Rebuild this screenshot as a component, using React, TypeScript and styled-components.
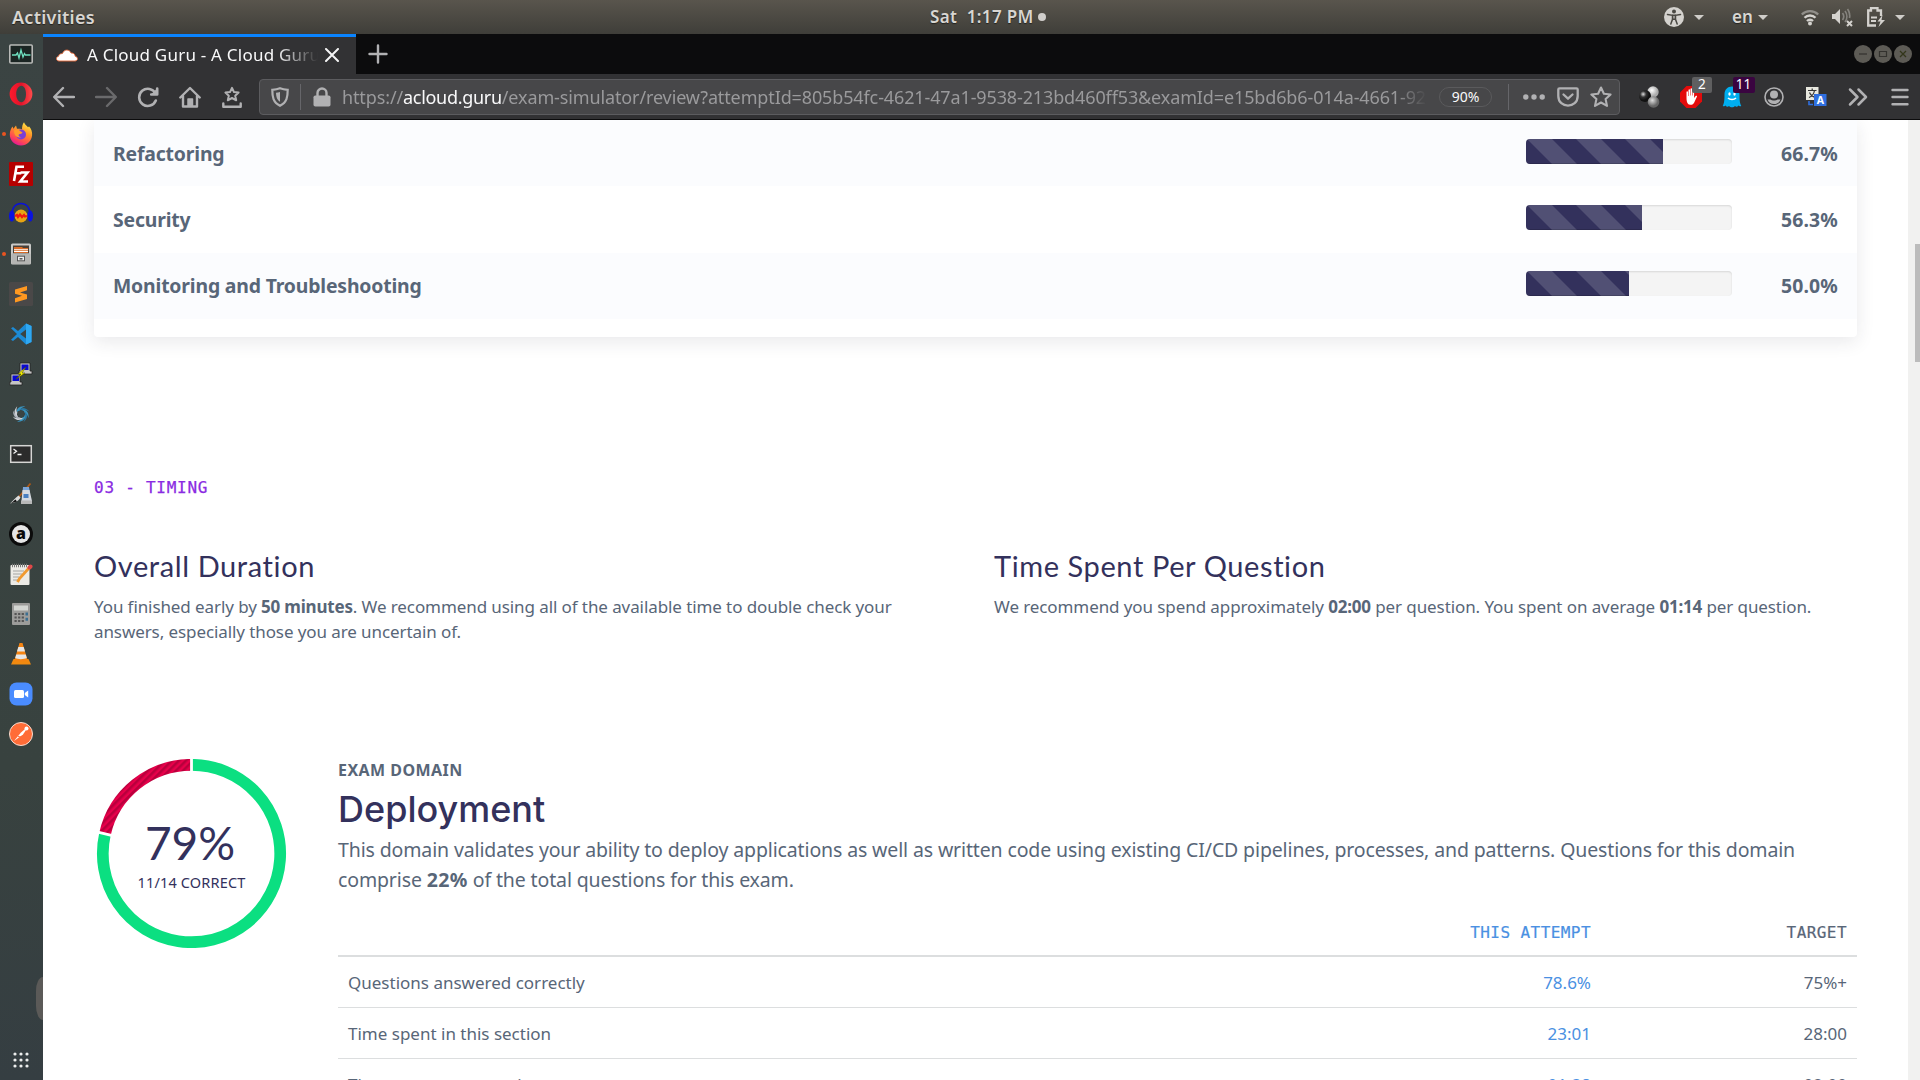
import React from 'react';
import styled, { createGlobalStyle } from 'styled-components';

const SANS = '"Noto Sans", "Open Sans", sans-serif';
const HEAD = 'Inter, Lato, sans-serif';
const MONO = '"DejaVu Sans Mono", "Liberation Mono", monospace';
const INK = '#586678';
const NAVY = '#33315c';

const GlobalStyle = createGlobalStyle`
  * { box-sizing: border-box; }
  body { margin: 0; overflow: hidden; font-family: ${SANS}; color: ${INK}; }
  p, h2, h3 { margin: 0; }
  svg { display: block; flex: none; }
`;

/* ---------- desktop shell ---------- */

const Desktop = styled.div`
  display: flex;
  flex-direction: column;
  width: 1920px;
  height: 1080px;
  overflow: hidden;
  background: #fff;
`;

const TopBar = styled.header`
  display: grid;
  grid-template-columns: 918px auto 1fr;
  align-items: center;
  height: 34px;
  flex: none;
  padding: 0 10px 0 12px;
  background: linear-gradient(#59554d, #3f3e39);
  color: #d8d6d2;
  font-size: 18px;
  font-weight: 600;
  line-height: 34px;
  text-shadow: 0 1px 1px rgba(0, 0, 0, 0.5);
`;

const Activities = styled.span`
  letter-spacing: 0.26px;
`;

const Clock = styled.div`
  display: flex;
  align-items: center;
  gap: 4px;
  font-size: 17px;
  letter-spacing: 0.34px;
  white-space: pre;
`;

const Dot = styled.i`
  width: 8px;
  height: 8px;
  border-radius: 50%;
  background: #d0cecb;
`;

const Tray = styled.div`
  display: flex;
  justify-content: flex-end;
  align-items: center;
`;

const TrayGap = styled.span<{ $w: number }>`
  width: ${(p) => p.$w}px;
`;

const Lang = styled.span`
  width: 20px;
  font-size: 17px;
`;

const Caret = styled.i`
  border: 5px solid transparent;
  border-top-color: #cfcdc9;
  border-bottom: 0;
`;

const Workspace = styled.div`
  display: flex;
  flex: 1;
  min-height: 0;
`;

const Dock = styled.nav`
  position: relative;
  display: flex;
  flex-direction: column;
  width: 43px;
  flex: none;
  background: linear-gradient(#3b4443, #38423f 70%, #353e42);
`;

const DockItem = styled.div<{ $running?: boolean }>`
  position: relative;
  display: flex;
  align-items: center;
  justify-content: center;
  width: 42px;
  height: 40px;
  flex: none;
  &::before {
    content: '';
    display: ${(p) => (p.$running ? 'block' : 'none')};
    position: absolute;
    left: 2px;
    top: 18px;
    width: 4px;
    height: 4px;
    border-radius: 50%;
    background: #e95420;
  }
`;

const DockFoot = styled(DockItem)`
  margin-top: auto;
`;

const DockBubble = styled.i`
  position: absolute;
  right: 0;
  bottom: 60px;
  width: 7px;
  height: 43px;
  border-radius: 8px 0 0 8px / 16px 0 0 16px;
  background: #5b5a58;
`;

/* ---------- browser chrome ---------- */

const Browser = styled.section`
  display: flex;
  flex-direction: column;
  flex: 1;
  min-width: 0;
`;

const TabStrip = styled.div`
  display: flex;
  height: 40px;
  flex: none;
  align-items: center;
  background: #0c0c0d;
`;

const Tab = styled.div`
  display: flex;
  align-items: center;
  width: 313px;
  height: 40px;
  padding: 0 17px 2px 12px;
  border-top: 3px solid #0a84ff;
  background: #323234;
`;

const TabTitle = styled.span`
  flex: 1;
  margin: 0 7px 0 8px;
  overflow: hidden;
  white-space: nowrap;
  color: #f9f9fa;
  font-size: 17px;
  line-height: 34px;
  letter-spacing: 0.22px;
  mask-image: linear-gradient(to right, #000 82%, transparent);
`;

const NewTab = styled.span`
  display: flex;
  width: 44px;
  justify-content: center;
`;

const WindowControls = styled.div`
  display: flex;
  gap: 2px;
  margin-left: auto;
  padding-right: 8px;
`;

const WinButton = styled.span`
  display: flex;
  align-items: center;
  justify-content: center;
  width: 18px;
  height: 18px;
  border-radius: 50%;
  background: #5d5b55;
`;

const Toolbar = styled.div`
  display: flex;
  align-items: center;
  height: 46px;
  flex: none;
  background: #323234;
  border-bottom: 1px solid #0c0c0d;
`;

const ToolButton = styled.span<{ $w?: number }>`
  position: relative;
  display: flex;
  align-items: center;
  justify-content: center;
  width: ${(p) => p.$w ?? 42}px;
  height: 40px;
  flex: none;
`;

const Badge = styled.b<{ $bg: string; $w: number }>`
  position: absolute;
  left: ${(p) => 42 - p.$w / 2 - 10}px;
  top: 0;
  width: ${(p) => p.$w}px;
  height: 16px;
  border-radius: 2px;
  background: ${(p) => p.$bg};
  color: #fff;
  font-size: 13.5px;
  font-weight: 400;
  line-height: 15px;
  text-align: center;
`;

const UrlBar = styled.div`
  display: flex;
  align-items: center;
  width: 1361px;
  height: 36px;
  margin: 0 8px 0 6px;
  flex: none;
  border: 1px solid #5c5c5f;
  border-radius: 4px;
  background: #474749;
`;

const UrlDivider = styled.i`
  width: 1px;
  height: 26px;
  flex: none;
  background: #66666a;
`;

const UrlText = styled.div`
  width: 1085px;
  flex: none;
  overflow: hidden;
  white-space: nowrap;
  color: #9a9a9c;
  font-size: 18px;
  line-height: 34px;
  letter-spacing: -0.125px;
  mask-image: linear-gradient(to right, #000 97%, transparent);
`;

const Host = styled.span`
  color: #f9f9fa;
  letter-spacing: -0.3px;
`;

const ZoomPill = styled.span`
  width: 53px;
  height: 20px;
  flex: none;
  margin: 0 16px 0 12px;
  border: 1px solid #5a5a5c;
  border-radius: 10px;
  color: #f9f9fa;
  font-size: 14px;
  line-height: 18px;
  text-align: center;
`;

const PageActions = styled.div`
  display: flex;
  align-items: center;
  gap: 11.5px;
  padding-left: 14px;
`;

/* ---------- page ---------- */

const Viewport = styled.div`
  display: flex;
  flex: 1;
  min-height: 0;
`;

const Page = styled.main`
  flex: 1;
  padding: 0 51px;
  overflow: hidden;
  background: #fff;
`;

const Scrollbar = styled.div`
  width: 12px;
  padding: 124px 0 0 7px;
  background: #f1f1f0;
`;

const Thumb = styled.div`
  height: 118px;
  background: #bcbcbc;
`;

const ScoreCard = styled.section`
  padding-bottom: 18px;
  border-radius: 0 0 4px 4px;
  background: #fff;
  box-shadow: 0 5px 18px rgba(40, 42, 60, 0.1);
`;

const ScoreRow = styled.div<{ $tint?: boolean; $h: number; $pb: number }>`
  display: grid;
  grid-template-columns: 1fr 206px 106px;
  align-items: center;
  height: ${(p) => p.$h}px;
  padding: 0 19px ${(p) => p.$pb}px;
  background: ${(p) => (p.$tint ? '#fbfcfe' : '#fff')};
  font-size: 19.4px;
  font-weight: 700;
  letter-spacing: -0.17px;
`;

const ScoreValue = styled.span`
  text-align: right;
  letter-spacing: 0.15px;
`;

const Meter = styled.div`
  height: 25px;
  margin-bottom: 3px;
  overflow: hidden;
  border-radius: 4px;
  background: #f4f4f4;
  box-shadow: inset 0 1px 2px rgba(0, 0, 0, 0.12);
`;

const MeterFill = styled.div`
  height: 100%;
  background-color: ${NAVY};
  background-image: linear-gradient(
    45deg,
    rgba(255, 255, 255, 0.15) 25%,
    transparent 25%,
    transparent 50%,
    rgba(255, 255, 255, 0.15) 50%,
    rgba(255, 255, 255, 0.15) 75%,
    transparent 75%
  );
  background-size: 49px 49px;
  background-position: 1.5px 0;
  box-shadow: inset 0 -1px 0 rgba(0, 0, 0, 0.15);
`;

const SectionLabel = styled.p`
  margin-top: 139px;
  color: #8a2be2;
  font: 16px/24px ${MONO};
  letter-spacing: 0.75px;
  -webkit-text-stroke: 0.25px;
`;

const TimingColumns = styled.section`
  display: grid;
  grid-template-columns: 820px 1fr;
  column-gap: 80px;
  margin-top: 48px;
`;

const TimingTitle = styled.h3`
  color: ${NAVY};
  font: 400 29px/36px Lato, sans-serif;
  letter-spacing: 0.6px;
`;

const TimingText = styled.p`
  margin-top: 10px;
  font-size: 17px;
  line-height: 25px;
  letter-spacing: -0.09px;
  b { letter-spacing: -0.2px; }
`;

const Domain = styled.section`
  display: grid;
  grid-template-columns: 195px 1fr;
  column-gap: 49px;
  align-items: start;
  margin-top: 115px;
`;

const Donut = styled.div`
  display: grid;
  place-items: center;
  width: 195px;
  height: 189px;
  > * { grid-area: 1 / 1; }
`;

const DonutText = styled.div`
  display: flex;
  flex-direction: column;
  align-items: center;
  gap: 3px;
  color: ${NAVY};
`;

const Percent = styled.span`
  padding-right: 3px;
  font: 400 46px/53px Lato, sans-serif;
`;

const Correct = styled.span`
  font-size: 14.5px;
  line-height: 20px;
  letter-spacing: 0.16px;
`;

const Eyebrow = styled.p`
  margin-top: 1px;
  font-size: 16px;
  font-weight: 700;
  line-height: 20px;
  letter-spacing: 0.45px;
`;

const DomainTitle = styled.h2`
  margin-top: 7px;
  color: ${NAVY};
  font: 500 36px/44px ${HEAD};
`;

const DomainText = styled.p`
  margin-top: 4px;
  font-size: 19.5px;
  line-height: 30px;
  letter-spacing: -0.13px;
  b { letter-spacing: 0.4px; }
`;

const StatHead = styled.div`
  display: grid;
  grid-template-columns: 1fr 260px 256px;
  align-items: center;
  height: 47px;
  margin-top: 15px;
  padding: 0 10px;
  border-bottom: 2px solid #dcdedf;
  font: 16px ${MONO};
  letter-spacing: 0.43px;
  text-align: right;
  -webkit-text-stroke: 0.2px;
`;

const StatRow = styled.div`
  display: grid;
  grid-template-columns: 1fr 260px 256px;
  align-items: center;
  height: 51px;
  padding: 0 10px;
  border-bottom: 1px solid #dcdedf;
  font-size: 17px;
`;

const Attempt = styled.span`
  color: #4a90e2;
  text-align: right;
`;

const Target = styled.span`
  text-align: right;
`;

/* ---------- icons ---------- */

const G = '#b1b1b3';

const Stroke = ({ size = 22, color = G, w = 2.2, children }: { size?: number; color?: string; w?: number; children: React.ReactNode }) => (
  <svg width={size} height={size} viewBox="0 0 22 22" fill="none" stroke={color} strokeWidth={w} strokeLinecap="round" strokeLinejoin="round">
    {children}
  </svg>
);

const dockIcons: { id: string; running?: boolean; art: React.ReactNode }[] = [
  { id: 'monitor', art: <>
    <rect x=".8" y="3" width="22.4" height="18" rx="1" fill="#1b2523" stroke="#b9bab8" strokeWidth="1.6" />
    <path d="M3 13h4l1.5-2 1.5 5 2-8 2 7 1.5-3.5 1 1.5h5" stroke="#6fe0c0" strokeWidth="1.3" fill="none" /></> },
  { id: 'opera', art: <>
    <defs><linearGradient id="op" x2="1" y2="0"><stop stopColor="#ff1b2d" /><stop offset=".5" stopColor="#e0132a" /><stop offset="1" stopColor="#ff4b4b" /></linearGradient></defs>
    <path fillRule="evenodd" fill="url(#op)" d="M12 .6a11.4 11.4 0 1 0 0 22.8A11.4 11.4 0 1 0 12 .6zm.4 3.2c3 0 4.6 3.8 4.6 8.2s-1.6 8.2-4.6 8.2-5.2-3.8-5.2-8.2 2.2-8.2 5.2-8.2z" /></> },
  { id: 'firefox', running: true, art: <>
    <defs><linearGradient id="fx" x1=".8" y1="0" x2=".3" y2="1"><stop stopColor="#fff04a" /><stop offset=".4" stopColor="#ff9626" /><stop offset=".75" stopColor="#ff4a52" /><stop offset="1" stopColor="#e3149b" /></linearGradient></defs>
    <path fill="url(#fx)" d="M15 .3c1 2.5 3 3.5 4 5 .8-.3.9-1 .9-1 2.5 2.5 3.5 6 3.2 9C22.6 19 18 23.5 12 23.5 5.5 23.5.8 18.5.8 12.6.8 9 2 6.5 3.6 4.5l.8 2.2L7 3.5l1 3.2c2 0 4 .1 5 .7C13 5 13.5 2 15 .3z" />
    <circle cx="12" cy="12.5" r="5" fill="#7a3fd6" />
    <path d="M5 8.5c2-1.5 5-1 6.5.8l2 1.2c-.5 1.5-2 1.5-3.5 1.7-1 1 .2 3 2.5 3-4 1-7.500-1-7.500-6.700z" fill="#ff9a2a" /></> },
  { id: 'filezilla', art: <>
    <rect width="24" height="24" rx="1" fill="#b50000" />
    <path d="M5 19L7.5 4.8H15M6.3 11.300h6M11.5 10.500h7l-7.200 9h7.700" stroke="#fff" strokeWidth="2.6" fill="none" /></> },
  { id: 'audacity', art: <>
    <circle cx="12" cy="14" r="6.5" fill="#e8a512" />
    <path d="M3 13C3 5 7 1.500 12 1.500S21 5 21 13" stroke="#0a12d8" strokeWidth="1.6" fill="none" />
    <ellipse cx="2.800" cy="14" rx="2.800" ry="5.500" fill="#0a12e0" /><ellipse cx="21.200" cy="14" rx="2.800" ry="5.500" fill="#0a12e0" />
    <path d="M6 14l2-1 1 2 2-2.500 2 2.500 2-2 1 1.500 2-.5" stroke="#f01a10" strokeWidth="2.2" fill="none" /></> },
  { id: 'files', running: true, art: <>
    <rect x="2" y="1.5" width="20" height="21" rx="1.5" fill="#c9c9c7" /><rect x="4" y="3.5" width="16" height="8" fill="#4a4038" />
    <path d="M5 5h8l1 1h5v5H5z" fill="#d96c28" /><path d="M5 7.8h14M5 9.5h14" stroke="#fff" strokeWidth="1.1" />
    <rect x="2.500" y="11.5" width="19" height="10.5" rx="1" fill="#b5b5b3" /><rect x="8.5" y="14.2" width="7" height="4.6" fill="#eee" stroke="#555" /><path d="M10.500 16.8h3" stroke="#444" strokeWidth="1.400" /></> },
  { id: 'sublime', art: <>
    <rect width="24" height="24" rx="1.5" fill="#4a4848" />
    <path d="M18 4v4.300L11 10.600l7 2V17L6 20.500v-4.300l7-2.400-7-2V7.500z" fill="#ff9820" /></> },
  { id: 'vscode', art: <>
    <path d="M17 1.5L22.5 4v16L17 22.5 9 15l-5 4-2-1.200L8 12 2 6.200 4 5l5 4z" fill="#1c8bd6" />
    <path d="M17 1.5L22.5 4v16L17 22.5z" fill="#2fa8f2" /><path d="M17 7.500v9L11.200 12z" fill="#3a4443" /></> },
  { id: 'putty', art: <>
    <path d="M11 1h10v8h2v3H10V9h1z" fill="#c4c4c4" stroke="#222" strokeWidth=".8" /><rect x="12.5" y="2.5" width="7" height="5.5" fill="#0a0ad0" />
    <path d="M2 12h9v8h2v3H.8v-3H2z" fill="#c4c4c4" stroke="#222" strokeWidth=".8" /><rect x="3.5" y="13.5" width="6.5" height="5.5" fill="#0a0ad0" />
    <path d="M17 5l-8 7h3l-5 5 9-6h-3z" fill="#f5f000" stroke="#555500" strokeWidth=".6" /></> },
  { id: 'swirl', art: <g transform="translate(12 12) scale(.84)">
    {[0, 45, 90, 135, 180].map((a) => (
      <path key={a} transform={`rotate(${a})`} d="M-5-1C-6-6-2-10 5-9 1-8-1-6-1-4.500-3-4-4.500-3-5-1z" fill={a % 90 ? '#2b76a0' : '#3a93bd'} />
    ))}
    {[225, 265, 305].map((a) => (
      <path key={a} transform={`rotate(${a})`} d="M-5-1C-6-6-2-10 5-9 1-8-1-6-1-4.500-3-4-4.500-3-5-1z" fill={a === 265 ? '#a9b0b8' : '#cdd1d6'} />
    ))}
    <circle r="3.800" fill="#3a4443" /></g> },
  { id: 'terminal', art: <>
    <rect x="1.700" y="3.700" width="20.600" height="16.600" fill="#2b2b2b" stroke="#d6d6d4" strokeWidth="1.500" />
    <path d="M4.500 7l3 2.200-3 2.200M8.500 12.500h4" stroke="#f4f4f4" strokeWidth="1.300" fill="none" /></> },
  { id: 'paint', art: <>
    <path d="M21.5 1.5L9 16" stroke="#b05a18" strokeWidth="1.8" /><path d="M9.500 13.500l2 2c-1.500 3-4.500 5-10.500 6C4 19 6 16 9.500 13.500z" fill="#ddd" /><path d="M1 21.500c3-1 3.500-3 5.500-4l1.500 2z" fill="#111" />
    <path d="M14 5h6l1 6H13.500z" fill="#7aa4d8" /><path d="M13.500 8h7L23 19H12.500z" fill="#d5d9df" /><rect x="12" y="18.500" width="11" height="3.500" fill="#b8b8b8" /><rect x="14.500" y="12" width="5" height="4" fill="#4a7fc0" /></> },
  { id: 'letter', art: <>
    <circle cx="12" cy="12" r="12" fill="#0b0b0b" /><circle cx="12" cy="12" r="9" fill="#e6e6e6" />
    <text x="12" y="16.500" textAnchor="middle" fontFamily="Noto Sans" fontWeight="900" fontSize="16" fill="#0b0b0b">a</text></> },
  { id: 'editor', art: <>
    <rect x="1.500" y="3" width="19" height="20" rx="1" fill="#ecebe6" /><path d="M3 3.500h16" stroke="#7a7a78" strokeWidth="3.500" strokeDasharray="1 1" />
    <path d="M4 9h11M4 12h9M4 15h6M4 18h5" stroke="#a5a5a2" strokeWidth="1" /><path d="M20 6L10.500 16.500l-2 3.500" stroke="#f09a30" strokeWidth="2.800" fill="none" /><path d="M21.500 4.500L20.500 5.500" stroke="#e04848" strokeWidth="4" strokeLinecap="round" /></> },
  { id: 'calculator', art: <>
    <rect x="3" y="1" width="18" height="22" rx="1" fill="#9c9c9a" /><rect x="5" y="3.500" width="14" height="5" fill="#d3d6d2" />
    <path d="M5.500 12h10M5.500 15.500h10M5.500 19h10" stroke="#555" strokeWidth="2" strokeDasharray="2.200 1.400" /><path d="M16.500 12h2.500M16.500 17.200h2.500" stroke="#3c6f92" strokeWidth="3" /></> },
  { id: 'vlc', art: <>
    <path d="M4.500 17h15L22 22.500H2z" fill="#f08a10" /><path d="M10.500 1h3l5 17c-3 2-10 2-13 0z" fill="#f58412" />
    <path d="M9.300 5h5.400l1.300 4.500H8zM7.200 12.500h9.600l1 3.500c-3 1.500-9 1.500-11.600 0z" fill="#e6e6e6" /></> },
  { id: 'zoom', art: <>
    <rect x=".5" y=".5" width="23" height="23" rx="7" fill="#4a8cff" /><rect x="5" y="8" width="10" height="8" rx="1.500" fill="#fff" /><path d="M15.800 11l3.400-2.500v7L15.800 13z" fill="#fff" /></> },
  { id: 'postman', art: <>
    <circle cx="12" cy="12" r="11.500" fill="#ff6c37" stroke="#f6ddd2" /><path d="M5 19l7-8.500 4-3.500 1 1-3 4.500z" fill="#fff" /><circle cx="17.500" cy="6.500" r="2" fill="#fff" /><path d="M9 14.500l3 .5" stroke="#ff6c37" /></> },
];

const domains = [
  { name: 'Refactoring', pct: 66.7, h: 66, pb: 0, tint: true },
  { name: 'Security', pct: 56.3, h: 67, pb: 1, tint: false },
  { name: 'Monitoring and Troubleshooting', pct: 50.0, h: 66, pb: 2, tint: true },
];

const stats = [
  ['Questions answered correctly', '78.6%', '75%+'],
  ['Time spent in this section', '23:01', '28:00'],
  ['Time spent per question', '01:38', '02:00'],
];

const polar = (deg: number, r: number) => {
  const a = (deg * Math.PI) / 180;
  return `${97.5 + r * Math.sin(a)} ${94.5 - r * Math.cos(a)}`;
};

const DonutChart = () => (
  <svg width="195" height="189" viewBox="0 0 195 189" fill="none">
    <defs>
      <pattern id="miss" width="5" height="5" patternUnits="userSpaceOnUse" patternTransform="rotate(45)">
        <rect width="5" height="5" fill="#e6004a" />
        <rect width="2.5" height="5" fill="#b8003c" />
      </pattern>
    </defs>
    <path d={`M${polar(0, 88.7)} A88.7 88.7 0 1 1 ${polar(282.8, 88.7)}`} stroke="#0bdf81" strokeWidth="11.7" />
    <path d={`M${polar(282.8, 88.7)} A88.7 88.7 0 0 1 ${polar(360, 88.7)}`} stroke="url(#miss)" strokeWidth="11.7" />
    <path d={`M${polar(0, 80)} L${polar(0, 96)} M${polar(282.8, 80)} L${polar(282.8, 96)}`} stroke="#fff" strokeWidth="2.8" />
  </svg>
);

export default function App() {
  return (
    <Desktop>
      <GlobalStyle />
      <TopBar>
        <Activities>Activities</Activities>
        <Clock>{'Sat  1:17 PM'}<Dot /></Clock>
        <Tray>
          <svg width="20" height="20" viewBox="0 0 20 20"><circle cx="10" cy="10" r="10" fill="#d4d2ce" /><circle cx="10" cy="4.500" r="2" fill="#4a4843" /><path d="M3.500 7.600l5 .7v4L6.800 17M16.500 7.600l-5 .7v4l1.700 4.700M8.700 8.300h2.600v4H8.700z" stroke="#4a4843" strokeWidth="1.500" strokeLinecap="round" fill="none" /></svg>
          <TrayGap $w={10} /><Caret /><TrayGap $w={28} />
          <Lang>en</Lang><TrayGap $w={6} /><Caret /><TrayGap $w={33} />
          <svg width="18" height="18" viewBox="0 0 18 18" fill="none" stroke="#d4d2ce" strokeWidth="2.300"><path d="M.8 6.500a11.500 11.500 0 0 1 16.400 0" stroke="#918f8a" /><path d="M3.500 9.800a7.700 7.700 0 0 1 11 0M6 13a4.200 4.200 0 0 1 6 0" /><circle cx="9" cy="15.500" r="2" fill="#d4d2ce" stroke="none" /></svg>
          <TrayGap $w={13} />
          <svg width="21" height="20" viewBox="0 0 21 20" fill="none"><path d="M0 7h3l5-5v15l-5-5H0z" fill="#d4d2ce" /><path d="M10.500 6a6 6 0 0 1 0 7M13 4a9 9 0 0 1 0 11M15.500 2a12 12 0 0 1 2 9" stroke="#85837e" strokeWidth="1.700" /><path d="M15 14l5 5m0-5l-5 5" stroke="#d4d2ce" strokeWidth="2" /></svg>
          <TrayGap $w={14} />
          <svg width="18" height="20" viewBox="0 0 18 20" fill="none"><path d="M9 18.500H1.200V3.500H4V1.200h6.500v2.300H14V9" stroke="#d4d2ce" strokeWidth="2.300" /><path d="M4 10.500h6M4 14h5" stroke="#d4d2ce" strokeWidth="2" /><path d="M15.500 8l-5 6.500h3L11.500 20l6.500-7h-3.500z" fill="#d4d2ce" /></svg>
          <TrayGap $w={10} /><Caret /><TrayGap $w={5} />
        </Tray>
      </TopBar>

      <Workspace>
        <Dock>
          {dockIcons.map((d) => (
            <DockItem key={d.id} $running={d.running}>
              <svg width="24" height="24" viewBox="0 0 24 24">{d.art}</svg>
            </DockItem>
          ))}
          <DockFoot>
            <svg width="18" height="18" viewBox="0 0 18 18" fill="#eceeed">
              {[3, 9, 15].map((y) => [3, 9, 15].map((x) => <circle key={`${x}${y}`} cx={x} cy={y} r="1.6" />))}
            </svg>
          </DockFoot>
          <DockBubble />
        </Dock>

        <Browser>
          <TabStrip>
            <Tab>
              <svg width="24" height="16" viewBox="0 0 24 16"><path d="M4 14C1 14 .5 10 3.500 9.300 4 6.500 6.500 6.800 7.500 6.500 9 2 14.500 2 16 6c3-.2 4 1.500 4.200 3.300C23.500 10 23 14 20 14z" fill="#fff" stroke="#e5693a" strokeWidth=".9" /></svg>
              <TabTitle>A Cloud Guru - A Cloud Guru</TabTitle>
              <svg width="14" height="14" viewBox="0 0 14 14" stroke="#f4f4f5" strokeWidth="2" strokeLinecap="round"><path d="M1 1l12 12M13 1L1 13" /></svg>
            </Tab>
            <NewTab><svg width="20" height="20" viewBox="0 0 20 20" stroke={G} strokeWidth="2.4" strokeLinecap="round"><path d="M10 1.500v17M1.500 10h17" /></svg></NewTab>
            <WindowControls>
              <WinButton><svg width="10" height="10" stroke="#33322e" strokeWidth="1.2"><path d="M1 5h8" /></svg></WinButton>
              <WinButton><svg width="10" height="10" stroke="#33322e" strokeWidth="1.2" fill="none"><path d="M1.500 2.500h7v5h-7z" /></svg></WinButton>
              <WinButton><svg width="10" height="10" stroke="#33361a" strokeWidth="1.3"><path d="M2 2l6 6M8 2L2 8" /></svg></WinButton>
            </WindowControls>
          </TabStrip>

          <Toolbar>
            <ToolButton><Stroke w={2.4}><path d="M21 11H1.500M10 2L1.200 11l8.800 9" /></Stroke></ToolButton>
            <ToolButton><Stroke w={2.4} color="#6a6a6c"><path d="M1 11h19.500M12 2l8.800 9-8.800 9" /></Stroke></ToolButton>
            <ToolButton><Stroke w={2.6}><path d="M18.800 14.500a8.600 8.600 0 1 1-.3-7" /><path d="M20.500 2v7h-7z" fill={G} stroke="none" /><path d="M20.200 2.500v6h-6" /></Stroke></ToolButton>
            <ToolButton><Stroke w={2.4}><path d="M1.300 11.500L11 2l9.700 9.500M4 10v10.500h14V10" /><path d="M9 20v-7h4.500v7z" fill={G} strokeWidth="1.5" /></Stroke></ToolButton>
            <ToolButton><Stroke w={2}><path d="M11 1.800l2 4.300 4.600.5-3.400 3.100 1 4.600L11 12l-4.200 2.300 1-4.600-3.400-3.100L9 6.100z" /><path d="M2.300 17.500v3.200h17.400v-3.200" strokeWidth="2.4" /></Stroke></ToolButton>

            <UrlBar>
              <ToolButton $w={40}><svg width="18" height="20" viewBox="0 0 18 20" fill="none"><path d="M9 1.300c2.500 1 5 1.400 7.700 1.500 0 7-.7 12.500-7.700 15.900C2 15.300 1.300 9.800 1.300 2.800 4 2.700 6.500 2.300 9 1.300z" stroke={G} strokeWidth="2.200" /><path d="M9 5c-1.300.4-2.500.7-4 .8.200 4 .8 7 4 8.900z" fill={G} /></svg></ToolButton>
              <UrlDivider />
              <ToolButton $w={41}><svg width="18" height="20" viewBox="0 0 18 20"><rect x=".5" y="8.500" width="17" height="11" rx="1.800" fill={G} /><path d="M4.500 10V6a4.500 4.500 0 0 1 9 0v4" stroke={G} strokeWidth="2.400" fill="none" /></svg></ToolButton>
              <UrlText>
                https://<Host>acloud.guru</Host>/exam-simulator/review?attemptId=805b54fc-4621-47a1-9538-213bd460ff53&amp;examId=e15bd6b6-014a-4661-92
              </UrlText>
              <ZoomPill>90%</ZoomPill>
              <UrlDivider />
              <PageActions>
                <svg width="22" height="6" fill={G}><circle cx="2.800" cy="3" r="2.700" /><circle cx="11" cy="3" r="2.700" /><circle cx="19.200" cy="3" r="2.700" /></svg>
                <svg width="22" height="20" viewBox="0 0 22 20" fill="none" stroke={G} strokeWidth="2.300" strokeLinecap="round" strokeLinejoin="round"><path d="M2.500 1.300h17c.7 0 1.200.5 1.200 1.200v6.500c0 12.800-19.400 12.800-19.400 0V2.500c0-.7.5-1.200 1.200-1.200z" /><path d="M6.500 7.500L11 11.700l4.500-4.200" /></svg>
                <Stroke w={2.1}><path d="M11 1.500l2.900 6.200 6.700.8-5 4.600 1.400 6.800L11 16.500l-6 3.400 1.400-6.800-5-4.600 6.700-.8z" /></Stroke>
              </PageActions>
            </UrlBar>

            <ToolButton $w={41.8}>
              <svg width="22" height="22" viewBox="0 0 22 22">
                <defs>
                  <radialGradient id="b1" cx=".35" cy=".35"><stop stopColor="#ddd" /><stop offset=".5" stopColor="#333" /><stop offset="1" stopColor="#111" /></radialGradient>
                  <radialGradient id="b2" cx=".4" cy=".35"><stop stopColor="#fff" /><stop offset="1" stopColor="#aaa" /></radialGradient>
                  <radialGradient id="b3" cx=".4" cy=".35"><stop stopColor="#ddd" /><stop offset="1" stopColor="#666" /></radialGradient>
                </defs>
                <circle cx="15" cy="6" r="5.700" fill="url(#b2)" /><circle cx="7" cy="10" r="6" fill="url(#b1)" /><circle cx="15.500" cy="16" r="5.800" fill="url(#b3)" />
              </svg>
            </ToolButton>
            <ToolButton $w={41.8}>
              <svg width="22" height="22" viewBox="0 0 22 22"><path d="M6.500 0h9L22 6.500v9L15.500 22h-9L0 15.500v-9z" fill="#e30b0b" /><path d="M6.500 11.500V6c0-1 1.400-1 1.500 0v4h.5V4c0-1 1.500-1 1.500 0v5.500h.5V3c0-1 1.600-1 1.600 0v6.500h.5V4.500c0-1 1.500-1 1.500 0V12l1.500-2c.8-.8 1.800-.2 1.300.8L14 17c-1 1.500-2.500 2-4 1.800-2.500-.3-3.500-2.500-3.500-7.300z" fill="#fff" /></svg>
              <Badge $bg="#5f5f60" $w={20}>2</Badge>
            </ToolButton>
            <ToolButton $w={41.8}>
              <svg width="20" height="22" viewBox="0 0 20 22"><path d="M2.500 8.500C2.500 3.500 5.500.5 10 .5s7.500 3 7.500 8c0 6 .3 8.500 1.800 11.500-1.500.5-2.300.2-3-.5-.7 1.500-2.300 1.800-3.300.5-1.200 1.700-4.800 1.700-6 0-1 1.300-2.600 1-3.300-.5-.7.7-1.500 1-3 .5C2.200 17 2.500 14.500 2.500 8.500z" fill="#00aef0" /><ellipse cx="7.500" cy="8" rx="1.200" ry="1.800" fill="#fff" /><ellipse cx="12.500" cy="8" rx="1.200" ry="1.800" fill="#fff" /><path d="M6 12c2 2 6 2 8 0" stroke="#fff" strokeWidth="1.600" fill="none" /></svg>
              <Badge $bg="#3a0440" $w={22}>11</Badge>
            </ToolButton>
            <ToolButton $w={41.8}>
              <svg width="20" height="20" viewBox="0 0 20 20" fill="none"><circle cx="10" cy="10" r="9" stroke={G} strokeWidth="1.600" /><circle cx="10" cy="7.500" r="4" fill={G} /><path d="M3.500 12.500h3c1.500 1.300 5.500 1.300 7 0h3c-1 3-3.700 4.500-6.500 4.500s-5.500-1.500-6.500-4.500z" fill={G} /></svg>
            </ToolButton>
            <ToolButton $w={41.8}>
              <svg width="22" height="22" viewBox="0 0 22 22"><rect x="1" y="1" width="12.500" height="13" fill="#e8e8df" /><path d="M3 4.500h8.500M7.200 2.500v2M4 11.500c3.500-1.500 5-4 5.500-7M4.500 6.500c1 2.500 3 4 6 5" stroke="#333" strokeWidth="1.200" fill="none" /><rect x="9" y="8" width="12.500" height="12" fill="#2f6fe0" /><path d="M4 15v3.500h4" stroke="#2f6fe0" strokeWidth="1.600" fill="none" /><text x="15.300" y="18" textAnchor="middle" fontFamily="Noto Sans" fontWeight="700" fontSize="10.500" fill="#fff">A</text></svg>
            </ToolButton>
            <ToolButton $w={41.8}><Stroke w={2.5}><path d="M3 3.500l7.500 7.500L3 18.500M11.500 3.500L19 11l-7.500 7.500" /></Stroke></ToolButton>
            <ToolButton $w={41.8}><svg width="18" height="18" viewBox="0 0 18 18" stroke={G} strokeWidth="2.400" strokeLinecap="round"><path d="M1.500 2h15M1.500 9h15M1.500 16.200h15" /></svg></ToolButton>
          </Toolbar>

          <Viewport>
            <Page>
              <ScoreCard>
                {domains.map((d) => (
                  <ScoreRow key={d.name} $tint={d.tint} $h={d.h} $pb={d.pb}>
                    <span>{d.name}</span>
                    <Meter><MeterFill style={{ width: `${d.pct}%` }} /></Meter>
                    <ScoreValue>{d.pct.toFixed(1)}%</ScoreValue>
                  </ScoreRow>
                ))}
              </ScoreCard>

              <SectionLabel>03 - TIMING</SectionLabel>

              <TimingColumns>
                <div>
                  <TimingTitle>Overall Duration</TimingTitle>
                  <TimingText>
                    You finished early by <b>50 minutes</b>. We recommend using all of the available time to double check your answers, especially those you are uncertain of.
                  </TimingText>
                </div>
                <div>
                  <TimingTitle>Time Spent Per Question</TimingTitle>
                  <TimingText>
                    We recommend you spend approximately <b>02:00</b> per question. You spent on average <b>01:14</b> per question.
                  </TimingText>
                </div>
              </TimingColumns>

              <Domain>
                <Donut>
                  <DonutChart />
                  <DonutText>
                    <Percent>79%</Percent>
                    <Correct>11/14 CORRECT</Correct>
                  </DonutText>
                </Donut>
                <div>
                  <Eyebrow>EXAM DOMAIN</Eyebrow>
                  <DomainTitle>Deployment</DomainTitle>
                  <DomainText>
                    This domain validates your ability to deploy applications as well as written code using existing CI/CD pipelines, processes, and patterns. Questions for this domain comprise <b>22%</b> of the total questions for this exam.
                  </DomainText>
                  <StatHead>
                    <span />
                    <Attempt>THIS ATTEMPT</Attempt>
                    <Target>TARGET</Target>
                  </StatHead>
                  {stats.map(([label, attempt, target]) => (
                    <StatRow key={label}>
                      <span>{label}</span>
                      <Attempt>{attempt}</Attempt>
                      <Target>{target}</Target>
                    </StatRow>
                  ))}
                </div>
              </Domain>
            </Page>
            <Scrollbar><Thumb /></Scrollbar>
          </Viewport>
        </Browser>
      </Workspace>
    </Desktop>
  );
}
